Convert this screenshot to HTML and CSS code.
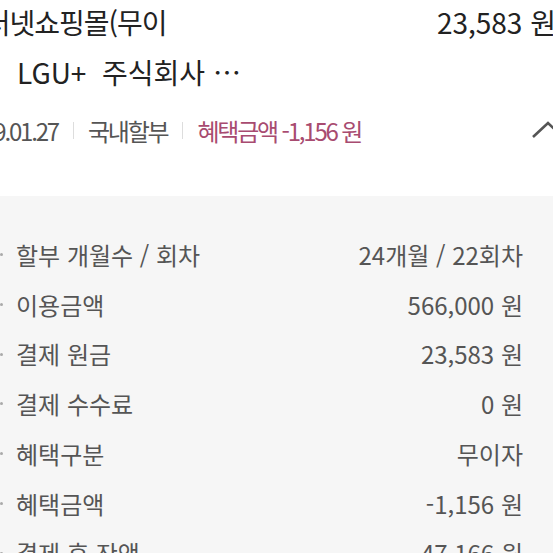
FILE: index.html
```html
<!DOCTYPE html>
<html lang="ko">
<head>
    <meta charset="UTF-8">
    <meta name="viewport" content="width=device-width, initial-scale=1.0">
    <title>결제 상세</title>
    <link rel="stylesheet" href="styles.css">
</head>
<body>

<div class="screen">
    <div class="summary">
        <div class="title-row">
            <div class="merchant">
                <p class="name">인터넷쇼핑몰(무이</p>
                <p class="sub">LGU+&nbsp; 주식회사 …</p>
            </div>
            <div class="amount">23,583 원</div>
        </div>
        <div class="meta-row">
            <div class="meta">
                <span class="date">2019.01.27</span>
                <i class="sep"></i>
                <span>국내할부</span>
                <i class="sep"></i>
                <span class="benefit">혜택금액 -1,156 원</span>
            </div>
            <svg class="chevron" width="36" height="20" viewBox="0 0 36 20">
                <polyline points="3,17 18,3 33,17" fill="none" stroke="#555" stroke-width="2.6"/>
            </svg>
        </div>
    </div>

    <div class="detail">
        <ul class="detail-list">
            <li><span class="label">할부 개월수 / 회차</span><span class="value">24개월 / 22회차</span></li>
            <li><span class="label">이용금액</span><span class="value">566,000 원</span></li>
            <li><span class="label">결제 원금</span><span class="value">23,583 원</span></li>
            <li><span class="label">결제 수수료</span><span class="value">0 원</span></li>
            <li><span class="label">혜택구분</span><span class="value">무이자</span></li>
            <li><span class="label">혜택금액</span><span class="value">-1,156 원</span></li>
            <li><span class="label">결제 후 잔액</span><span class="value">47,166 원</span></li>
        </ul>
    </div>
</div>

</body>
</html>
```

FILE: styles.css
```css
body {
    margin: 0;
    background: #fff;
    font-family: "Noto Sans CJK KR", "Noto Sans", sans-serif;
    color: #222;
    overflow: hidden;
}
.screen {
    width: 553px;
    height: 553px;
    overflow: hidden;
}
.summary {
    padding-bottom: 44px;
}
.title-row {
    display: flex;
    justify-content: space-between;
    margin: -3px -3px 0 -40px;
    font-size: 28px;
    line-height: 50px;
    color: #222;
}
.merchant p {
    margin: 0;
    white-space: nowrap;
}
.merchant .name {
    letter-spacing: -1px;
}
.merchant .sub {
    padding-left: 57px;
}
.amount {
    white-space: nowrap;
    margin-left: 12px;
}
.meta-row {
    display: flex;
    justify-content: space-between;
    align-items: center;
    height: 44px;
    margin-top: 11px;
}
.meta {
    display: flex;
    align-items: center;
    margin-left: -40px;
    font-size: 24px;
    letter-spacing: -2.2px;
    color: #555;
    white-space: nowrap;
}
.sep {
    display: inline-block;
    width: 1px;
    height: 17px;
    background: #ddd;
    margin: 0 14px 0 15px;
}
.benefit {
    color: #a84b70;
}
.chevron {
    margin-right: -13px;
    flex-shrink: 0;
}
.detail {
    background: #f6f6f6;
    padding-top: 34px;
    min-height: 400px;
}
.detail-list {
    list-style: none;
    margin: 0;
    padding: 0 30px 0 0;
    font-size: 24px;
    line-height: 49.7px;
    color: #555;
}
.detail-list li {
    display: flex;
    align-items: center;
}
.detail-list li::before {
    content: "";
    width: 3px;
    height: 3px;
    border-radius: 50%;
    background: #aaa;
    margin-right: 13px;
}
.detail-list .value {
    margin-left: auto;
}
```
